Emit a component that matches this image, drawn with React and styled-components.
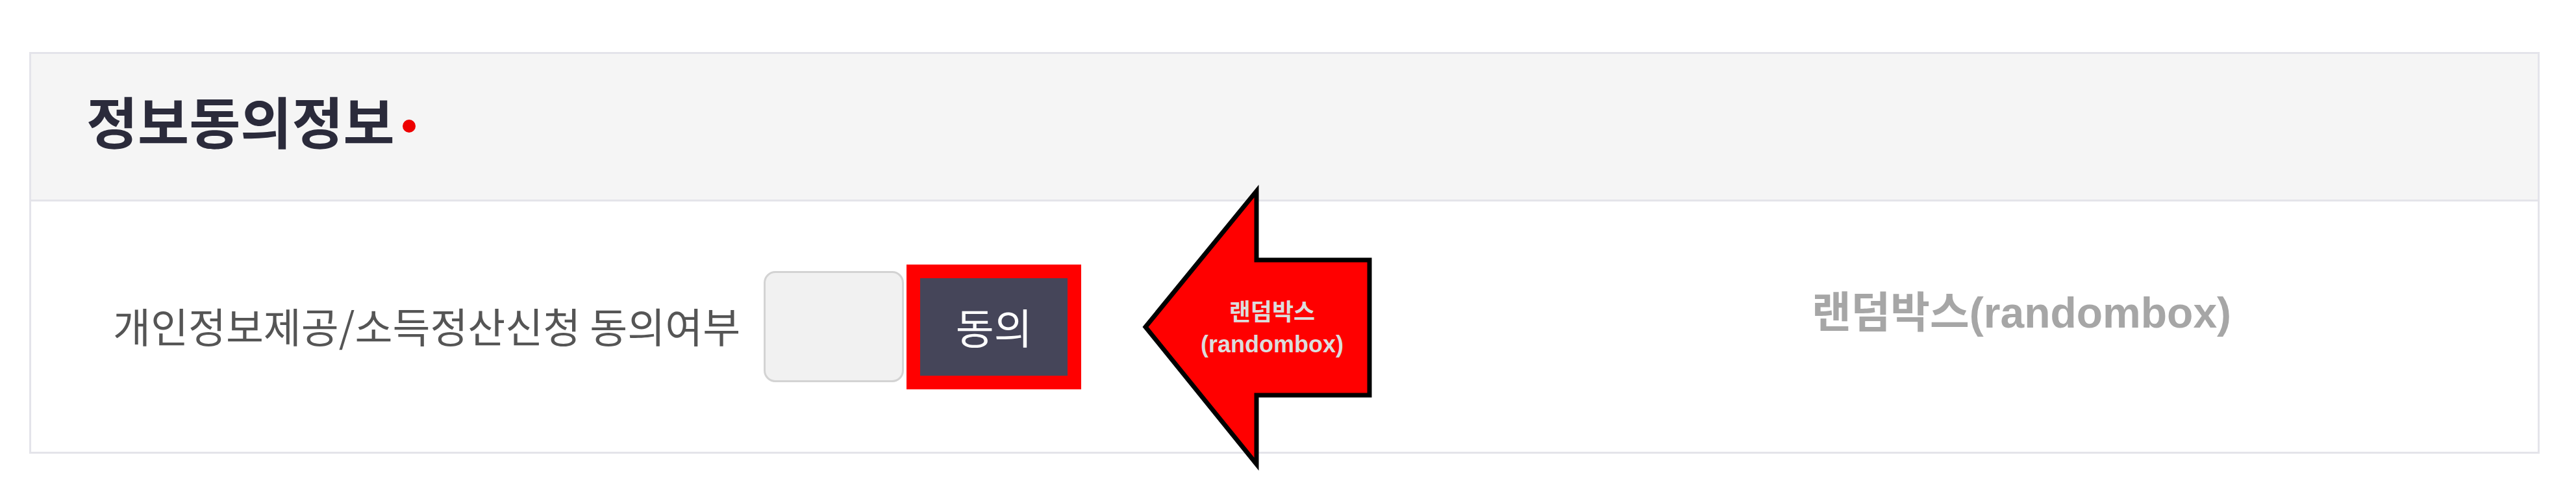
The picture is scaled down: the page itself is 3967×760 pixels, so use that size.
import React from 'react';
import styled, { createGlobalStyle } from 'styled-components';

const GlobalStyle = createGlobalStyle`
  html, body {
    margin: 0;
    padding: 0;
    background: #ffffff;
  }
  body {
    font-family: "Noto Sans CJK KR", "Noto Sans", sans-serif;
  }
`;

const Page = styled.div`
  box-sizing: border-box;
  min-height: 760px;
  padding: 80px 0 0 45px;
`;

const Card = styled.section`
  position: relative;
  box-sizing: border-box;
  width: 3866px;
  border: 3px solid #e4e4ea;
  background: #fff;
`;

const Header = styled.header`
  display: flex;
  align-items: center;
  box-sizing: border-box;
  height: 227px;
  padding: 0 0 20px 85px;
  background: #f5f5f5;
  border-bottom: 3px solid #e4e4ea;
`;

const Title = styled.h2`
  display: inline-flex;
  align-items: center;
  margin: 0;
  font-size: 86px;
  font-weight: 700;
  color: #2b2b3b;
  line-height: 1;

  &::after {
    content: '';
    width: 20px;
    height: 20px;
    margin: 18px 0 0 12px;
    border-radius: 50%;
    background: #ee0000;
  }
`;

const Body = styled.div`
  display: grid;
  grid-template-columns: 2270px 1fr;
  align-items: center;
  height: 385px;
`;

const Field = styled.div`
  display: flex;
  align-items: center;
  padding-left: 126px;
`;

const Label = styled.span`
  font-size: 63px;
  color: #555555;
  margin-right: 36px;
  padding-bottom: 6px;
`;

const Input = styled.input`
  box-sizing: border-box;
  width: 216px;
  height: 171px;
  margin-right: 4px;
  border: 3px solid #d3d3d3;
  border-radius: 18px;
  background: #f1f1f1;
  outline: none;
`;

const Highlight = styled.span`
  display: inline-flex;
  border: 21px solid #ff0000;
`;

const Button = styled.button`
  width: 227px;
  height: 150px;
  border: 0;
  padding: 0 0 4px;
  background: #454559;
  color: #ffffff;
  font-family: "Noto Sans CJK KR", sans-serif;
  font-size: 64px;
  cursor: pointer;
`;

const RandomBox = styled.div`
  text-align: center;
  font-family: "Liberation Sans", "Noto Sans CJK KR", sans-serif;
  font-weight: 700;
  font-size: 66px;
  color: #a6a6a6;
  margin-bottom: 56px;
`;

const Callout = styled.div`
  position: absolute;
  left: 1706px;
  top: 201px;
  width: 362px;
  height: 440px;
`;

const CalloutText = styled.div`
  position: absolute;
  left: 95px;
  top: 172px;
  width: 220px;
  text-align: center;
  font-family: "Liberation Sans", "Noto Sans CJK KR", sans-serif;
  font-weight: 700;
  font-size: 36px;
  line-height: 49px;
  color: #dcdcdc;
`;

const Arrow = () => (
  <svg width="362" height="440" viewBox="0 0 362 440" style={{ display: 'block' }}>
    <polygon
      points="10,219 181,10 181,116 355,116 355,324 181,324 181,430"
      fill="#ff0000"
      stroke="#000000"
      strokeWidth="7"
      strokeLinejoin="miter"
      strokeMiterlimit="10"
    />
  </svg>
);

const App = () => {
  return (
    <Page>
      <GlobalStyle />
      <Card>
        <Header>
          <Title>정보동의정보</Title>
        </Header>
        <Body>
          <Field>
            <Label>개인정보제공/소득정산신청 동의여부</Label>
            <Input type="text" readOnly />
            <Highlight>
              <Button type="button">동의</Button>
            </Highlight>
          </Field>
          <RandomBox>랜덤박스(randombox)</RandomBox>
        </Body>
        <Callout>
          <Arrow />
          <CalloutText>
            랜덤박스
            <br />
            (randombox)
          </CalloutText>
        </Callout>
      </Card>
    </Page>
  );
};

export default App;
